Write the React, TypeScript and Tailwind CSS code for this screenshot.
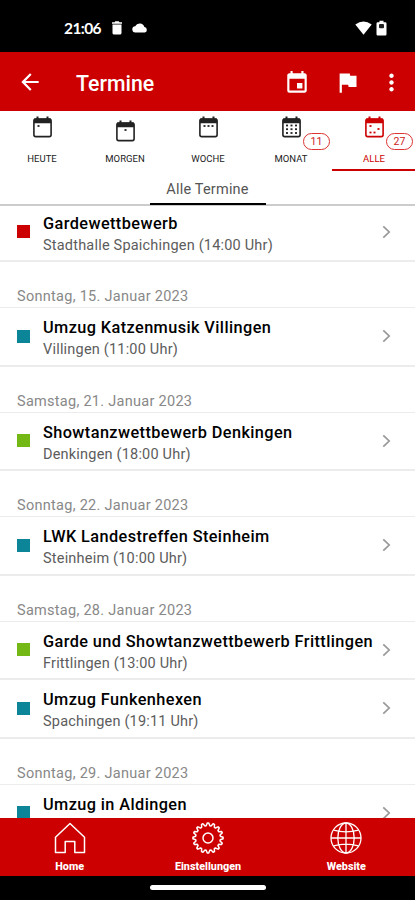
import { MdArrowBack, MdEvent, MdFlag, MdMoreVert } from "react-icons/md";

const days = [
  {
    date: "",
    events: [{ title: "Gardewettbewerb", place: "Stadthalle Spaichingen (14:00 Uhr)", color: "bg-[#cc0000]" }],
  },
  {
    date: "Sonntag, 15. Januar 2023",
    events: [{ title: "Umzug Katzenmusik Villingen", place: "Villingen (11:00 Uhr)", color: "bg-[#0d8599]" }],
  },
  {
    date: "Samstag, 21. Januar 2023",
    events: [{ title: "Showtanzwettbewerb Denkingen", place: "Denkingen (18:00 Uhr)", color: "bg-[#74b816]" }],
  },
  {
    date: "Sonntag, 22. Januar 2023",
    events: [{ title: "LWK Landestreffen Steinheim", place: "Steinheim (10:00 Uhr)", color: "bg-[#0d8599]" }],
  },
  {
    date: "Samstag, 28. Januar 2023",
    events: [
      { title: "Garde und Showtanzwettbewerb Frittlingen", place: "Frittlingen (13:00 Uhr)", color: "bg-[#74b816]" },
      { title: "Umzug Funkenhexen", place: "Spachingen (19:11 Uhr)", color: "bg-[#0d8599]" },
    ],
  },
  {
    date: "Sonntag, 29. Januar 2023",
    events: [{ title: "Umzug in Aldingen", place: "", color: "bg-[#0d8599]" }],
  },
];

const tabs = [
  { label: "HEUTE", dots: [[5.5, 10]] },
  { label: "MORGEN", dots: [[9.5, 10]] },
  { label: "WOCHE", dots: [[5.5, 10], [9.5, 10], [13.5, 10]] },
  {
    label: "MONAT",
    count: 11,
    dots: [[5, 9.5], [9.5, 9.5], [14, 9.5], [5, 13.2], [9.5, 13.2], [14, 13.2], [5, 17], [9.5, 17], [14, 17]],
  },
  { label: "ALLE", count: 27, active: true, dots: [[5.5, 10], [13.5, 13], [5.5, 16.5], [9.5, 16.5]] },
];

function CalendarIcon({ dots }: { dots: number[][] }) {
  return (
    <svg width="19" height="22" viewBox="0 0 19 22" fill="none">
      <rect x="0.9" y="3" width="17.2" height="17.6" rx="1.8" stroke="currentColor" strokeWidth="1.6" />
      <path d="M1 2.5h17v4.7H1zM3.5 0.5h2v3h-2zM13.5 0.5h2v3h-2z" fill="currentColor" />
      {dots.map(([x, y], i) => (
        <rect key={i} x={x - 1} y={y - 0.9} width="2" height="1.8" fill="currentColor" />
      ))}
    </svg>
  );
}

function HomeIcon() {
  return (
    <svg width="32" height="32" viewBox="0 0 32 32" fill="none" stroke="white" strokeWidth="1.5" strokeLinejoin="round">
      <path d="M1.5 15.2 16 1.5l14.5 13.7v15.3H20.8V19.5h-9.6v11H1.5z" />
    </svg>
  );
}

function GearIcon() {
  const teeth = 16;
  const points = Array.from({ length: teeth * 4 }, (_, i) => {
    const angle = ((i - 0.5) / (teeth * 4)) * Math.PI * 2;
    const r = i % 4 < 2 ? 15.1 : 12.4;
    return `${(16 + r * Math.cos(angle)).toFixed(2)},${(16 + r * Math.sin(angle)).toFixed(2)}`;
  }).join(" ");
  return (
    <svg width="32" height="32" viewBox="0 0 32 32" fill="none" stroke="white" strokeWidth="1.5" strokeLinejoin="round">
      <polygon points={points} />
      <circle cx="16" cy="16" r="5" />
    </svg>
  );
}

function GlobeIcon() {
  return (
    <svg width="32" height="32" viewBox="0 0 32 32" fill="none" stroke="white" strokeWidth="1.3">
      <circle cx="16" cy="16" r="15" />
      <ellipse cx="16" cy="16" rx="8.2" ry="15" />
      <path d="M16 1v30M1 16h30M3.5 8.2Q16 11.5 28.5 8.2M3.5 23.8Q16 20.5 28.5 23.8" />
    </svg>
  );
}

export default function App() {
  return (
    <div className="w-[415px] h-[900px] flex flex-col overflow-hidden bg-white font-['Roboto',sans-serif] text-black">
      {/* Status bar */}
      <div className="h-[52px] shrink-0 bg-black text-white flex items-center pl-16 pr-[28px] pt-[4px]">
        <span className="font-['Lato',sans-serif] font-bold text-[15.5px] tracking-[-0.6px] leading-5 w-[47px]">21:06</span>
        <svg className="-mt-px" width="12" height="14" viewBox="0 0 12 14" fill="white">
          <path d="M1 1.2h2.5L4.3.3h3.4l.8.9H11v1.6H1zM1.5 3.6h9V12a1.6 1.6 0 0 1-1.6 1.6H3.1A1.6 1.6 0 0 1 1.5 12z" />
        </svg>
        <svg className="ml-[9px]" width="16" height="10" viewBox="0 0 16 10" fill="white">
          <path d="M3.6 9.5a3.1 3.1 0 0 1-.4-6.2A5 5 0 0 1 12.4 4a2.8 2.8 0 0 1 .3 5.5z" />
        </svg>
        <svg className="ml-auto" width="17" height="14" viewBox="0 0 17 14" fill="white">
          <path d="M.3 3.5Q8.5-2.7 16.7 3.5L8.5 13.7z" />
        </svg>
        <svg className="ml-[4px]" width="11" height="16" viewBox="0 0 11 16">
          <path fill="white" d="M3.5.7h4v1.5h1.8q1.2 0 1.2 1.2v10.8q0 1.2-1.2 1.2H1.7q-1.2 0-1.2-1.2V3.4q0-1.2 1.2-1.2h1.8z" />
          <rect x="3" y="4" width="5" height="4.2" rx="1" fill="#222" />
        </svg>
      </div>

      {/* App bar */}
      <header className="h-[59px] shrink-0 bg-[#cc0000] text-white flex items-center pl-[17px] pr-[10px]">
        <MdArrowBack size={26} className="mt-px" />
        <h1 className="ml-[33px] mt-[4px] text-[21.3px] leading-7 font-medium">Termine</h1>
        <MdEvent size={26} className="ml-auto mt-[3px]" />
        <MdFlag size={27} className="ml-[24px] mt-px" />
        <MdMoreVert size={27} className="ml-[17px] mt-[2px]" />
      </header>

      {/* Filter tabs */}
      <nav className="h-[60px] shrink-0 grid grid-cols-5">
        {tabs.map((tab) => (
          <div
            key={tab.label}
            className={
              tab.active
                ? "relative flex flex-col items-center pt-[5px] pl-px text-[#cc0000] border-b-2 border-[#cc0000]"
                : "relative flex flex-col items-center pt-[5px] pl-px text-[#222]"
            }
          >
            <div className={tab.label === "MORGEN" ? "h-[37px] pt-1" : "h-[37px]"}>
              <CalendarIcon dots={tab.dots} />
            </div>
            <span className="text-[9.5px] leading-3">{tab.label}</span>
            {tab.count && (
              <span className="absolute left-[54px] top-[22px] w-[27px] h-[17px] rounded-full border border-[#dd3333] bg-white text-[#cc2222] text-[10.5px] leading-[15px] text-center">
                {tab.count}
              </span>
            )}
          </div>
        ))}
      </nav>
      <div className="h-[35px] shrink-0 flex justify-center border-b-2 border-[#cccccc]">
        <div className="w-[116px] h-[34px] border-b-2 border-black text-center text-[14.5px] leading-[37px] tracking-[0.2px] text-[#555]">
          Alle Termine
        </div>
      </div>

      {/* Event list */}
      <main className="flex-1 min-h-0 overflow-hidden -mt-[2.5px]">
        {days.map((day) => (
          <section key={day.date}>
            {day.date && (
              <h2 className="h-[46px] pl-[17px] pt-[23px] text-[14.5px] leading-6 tracking-[0.28px] text-[#888] border-b border-[#ececec]">
                {day.date}
              </h2>
            )}
            {day.events.map((event) => (
              <div key={event.title} className="h-[58.5px] flex items-center pl-[17px] pr-[24px] border-b-2 border-[#ececec]">
                <span className={`w-[13px] h-[13px] shrink-0 ${event.color}`} />
                <div className="ml-[13px] h-[42px] pt-[2px] flex-1 whitespace-nowrap">
                  <h3 className="text-[16.3px] leading-[22px] font-medium tracking-[0.41px]">{event.title}</h3>
                  {event.place && (
                    <p className="text-[14.5px] leading-[21px] tracking-[0.2px] text-[#5c5c5c]">{event.place}</p>
                  )}
                </div>
                <svg width="9" height="14" viewBox="0 0 9 14" fill="none" stroke="#999" strokeWidth="1.7">
                  <path d="m1.3 1.3 5.9 5.7-5.9 5.7" />
                </svg>
              </div>
            ))}
          </section>
        ))}
      </main>

      {/* Bottom navigation */}
      <footer className="h-[58px] shrink-0 bg-[#cc0000] text-white grid grid-cols-3 text-[10.8px] leading-[14px] font-extrabold">
        <div className="flex flex-col items-center pt-1 pl-px">
          <HomeIcon />
          <span className="mt-[6px]">Home</span>
        </div>
        <div className="flex flex-col items-center pt-1 pl-px">
          <GearIcon />
          <span className="mt-[6px]">Einstellungen</span>
        </div>
        <div className="flex flex-col items-center pt-1 pl-px">
          <GlobeIcon />
          <span className="mt-[6px]">Website</span>
        </div>
      </footer>
      <div className="h-6 shrink-0 bg-black flex justify-center pt-[9px]">
        <div className="w-[116px] h-[5px] rounded-full bg-white" />
      </div>
    </div>
  );
}
